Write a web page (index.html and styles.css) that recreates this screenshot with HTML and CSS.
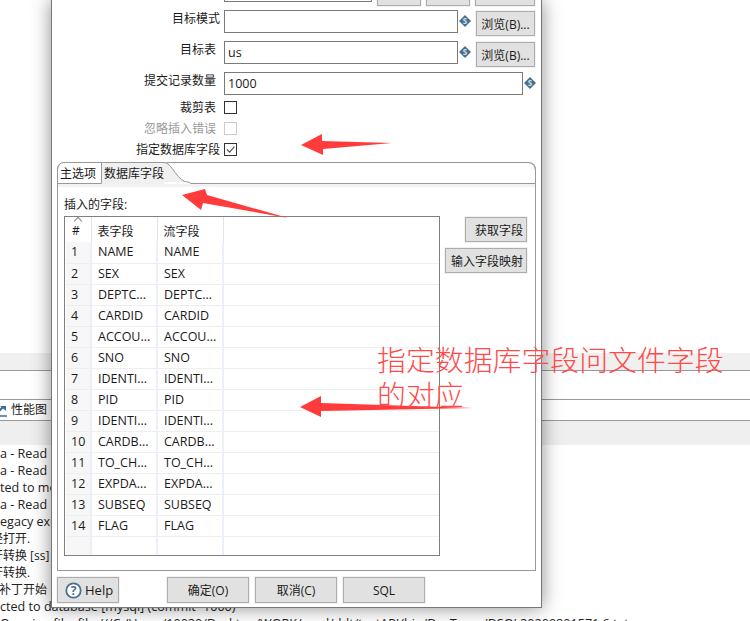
FILE: index.html
```html
<!DOCTYPE html>
<html lang="zh">
<head>
<meta charset="utf-8">
<title>表输出</title>
<link rel="stylesheet" href="styles.css">
</head>
<body>
<div class="desk">
  <div class="bg-band"></div>
  <div class="bg-gap-a"></div>
  <div class="bg-tabs">
    <div class="perf-tab">
      <svg class="perf-icon" width="8" height="14" viewBox="0 0 8 14"><path d="M-3 10 L3 4" fill="none" stroke="#3f6f94" stroke-width="2"/><path d="M0 3H6V8Z" fill="#3f6f94"/><path d="M-2 13H7" stroke="#3f6f94" stroke-width="1.5"/></svg>
      <span>性能图</span>
    </div>
  </div>
  <div class="bg-band2"></div>
  <div class="log">
    <div>a - Read</div>
    <div>a - Read</div>
    <div>ted to me</div>
    <div>a - Read</div>
    <div>egacy exe</div>
    <div class="cut">经打开.</div>
    <div class="cut">开转换 [ss]</div>
    <div class="cut">开转换.</div>
    <div class="cut-small">补丁开始</div>
    <div>cted to database [mysql] (commit=1000)</div>
    <div class="last">Opening file: file:///C:/Users/10020/Desktop/WORK/xxxd/ddt/testAPI/bin/DevTemp/DSQL20200801571 6.txt</div>
  </div>

  <div class="dialog">
    <div class="row row-first">
      <div class="label"></div>
      <div class="input input-first"></div>
      <div class="btn btn-top"></div>
      <div class="btn btn-top"></div>
      <div class="btn btn-top btn-top-wide"></div>
    </div>
    <div class="row">
      <div class="label">目标模式</div>
      <div class="input input-mid"></div>
      <svg class="var" viewBox="0 0 12 12"><path d="M6 0L12 6L6 12L0 6Z" fill="#4a7090"/><text x="6" y="9" text-anchor="middle" class="var-s">S</text></svg>
      <div class="btn btn-browse">浏览(B)...</div>
    </div>
    <div class="row">
      <div class="label label-short">目标表</div>
      <div class="input input-mid">us</div>
      <svg class="var" viewBox="0 0 12 12"><path d="M6 0L12 6L6 12L0 6Z" fill="#4a7090"/><text x="6" y="9" text-anchor="middle" class="var-s">S</text></svg>
      <div class="btn btn-browse">浏览(B)...</div>
    </div>
    <div class="row row-commit">
      <div class="label label-short">提交记录数量</div>
      <div class="input input-long">1000</div>
      <svg class="var" viewBox="0 0 12 12"><path d="M6 0L12 6L6 12L0 6Z" fill="#4a7090"/><text x="6" y="9" text-anchor="middle" class="var-s">S</text></svg>
    </div>
    <div class="row-check">
      <div class="label label-short">裁剪表</div>
      <div class="check"></div>
    </div>
    <div class="row-check">
      <div class="label label-short label-off">忽略插入错误</div>
      <div class="check check-off"></div>
    </div>
    <div class="row-check">
      <div class="label">指定数据库字段</div>
      <div class="check"><svg viewBox="0 0 11 11" width="11" height="11"><path d="M2 5.5L4.6 8.2L9.4 2.6" fill="none" stroke="#555" stroke-width="1.2"/></svg></div>
    </div>

    <div class="folder">
      <div class="tabs">
        <div class="tab">主选项</div>
        <div class="tab-on">
          <span class="tab-on-text">数据库字段</span>
          <svg class="tab-curve" width="26" height="21" viewBox="0 0 26 21"><path d="M0 0C9 0 12 20 26 20H0Z" fill="#f0f0f0"/><path d="M0 .5C9 .5 12 20.500 26 20.500" fill="none" stroke="#999"/></svg>
        </div>
        <div class="tab-rest"></div>
      </div>
      <div class="panel">
        <div class="caption">插入的字段:</div>
        <div class="panel-body">
          <div class="table-box">
            <table class="grid">
              <colgroup><col class="c-n"><col class="c-f"><col class="c-f"><col></colgroup>
              <thead>
                <tr><th class="num"><span class="sort"></span>#</th><th>表字段</th><th>流字段</th><th class="fill"></th></tr>
              </thead>
              <tbody>
                <tr><td class="num">1</td><td>NAME</td><td>NAME</td><td></td></tr>
                <tr><td class="num">2</td><td>SEX</td><td>SEX</td><td></td></tr>
                <tr><td class="num">3</td><td>DEPTC...</td><td>DEPTC...</td><td></td></tr>
                <tr><td class="num">4</td><td>CARDID</td><td>CARDID</td><td></td></tr>
                <tr><td class="num">5</td><td>ACCOU...</td><td>ACCOU...</td><td></td></tr>
                <tr><td class="num">6</td><td>SNO</td><td>SNO</td><td></td></tr>
                <tr><td class="num">7</td><td>IDENTI...</td><td>IDENTI...</td><td></td></tr>
                <tr><td class="num">8</td><td>PID</td><td>PID</td><td></td></tr>
                <tr><td class="num">9</td><td>IDENTI...</td><td>IDENTI...</td><td></td></tr>
                <tr><td class="num">10</td><td>CARDB...</td><td>CARDB...</td><td></td></tr>
                <tr><td class="num">11</td><td>TO_CH...</td><td>TO_CH...</td><td></td></tr>
                <tr><td class="num">12</td><td>EXPDA...</td><td>EXPDA...</td><td></td></tr>
                <tr><td class="num">13</td><td>SUBSEQ</td><td>SUBSEQ</td><td></td></tr>
                <tr><td class="num">14</td><td>FLAG</td><td>FLAG</td><td></td></tr>
                <tr class="empty"><td class="num"></td><td></td><td></td><td></td></tr>
              </tbody>
            </table>
          </div>
          <div class="side">
            <div class="btn btn-side-a">获取字段</div>
            <div class="btn btn-side-b">输入字段映射</div>
          </div>
        </div>
      </div>
    </div>

    <div class="footer">
      <div class="btn btn-help">
        <svg class="help-icon" width="17" height="17" viewBox="0 0 17 17"><circle cx="8.500" cy="8.500" r="7.200" fill="#fff" stroke="#4a7090" stroke-width="1.800"/><text x="8.500" y="12.500" text-anchor="middle" class="help-q">?</text></svg>
        <span>Help</span>
      </div>
      <div class="btn btn-foot btn-foot-first">确定(O)</div>
      <div class="btn btn-foot">取消(C)</div>
      <div class="btn btn-foot">SQL</div>
    </div>
  </div>

  <svg class="arrows" width="750" height="621" viewBox="0 0 750 621">
    <path d="M301 145L322 134L322 141L392 143L323 149L323 155Z"/>
    <path d="M182 195L205 189L207 195L288 218L203 203L201 210Z"/>
    <path d="M300 407L321 396L321 403L474 408L321 411L321 417Z"/>
  </svg>
  <div class="note">指定数据库字段问文件字段<br>的对应</div>
</div>
</body>
</html>
```

FILE: styles.css
```css
* { box-sizing: border-box; }
html, body { margin: 0; padding: 0; background: #fff; }
body {
  font-family: "Open Sans", "Noto Sans CJK SC", sans-serif;
  font-size: 12px;
  color: #1a1a1a;
}
.desk {
  position: relative;
  width: 750px;
  height: 621px;
  overflow: hidden;
  padding-top: 353px;
}
.bg-band { height: 18px; background: #f0f0f0; border-bottom: 1px solid #999; }
.bg-gap-a { height: 28px; }
.bg-tabs { height: 22px; border-top: 1px solid #999; border-bottom: 1px solid #999; }
.perf-tab {
  display: flex;
  align-items: center;
  gap: 3px;
  height: 20px;
  color: #1a1a1a;
  line-height: 20px;
}
.perf-icon { flex: none; }
.bg-band2 { height: 24px; background: #efefef; }
.log {
  line-height: 17px;
  font-size: 12.600px;
  white-space: nowrap;
  color: #222;
}
.log .cut { margin-left: -9px; font-size: 12px; }
.log .cut-small { margin-left: -1px; font-size: 12px; }

.dialog {
  position: absolute;
  left: 51px;
  top: 0;
  width: 491px;
  height: 608px;
  background: #fff;
  border: 1px solid #777;
  border-top: 0;
  box-shadow: 0 0 18px rgba(0, 0, 0, .45);
  overflow: hidden;
}
.row { display: flex; align-items: flex-start; height: 31px; }
.row-first { margin-top: -21px; }
.row-commit { height: 29px; }
.label {
  flex: none;
  width: 168px;
  text-align: right;
  line-height: 18px;
  margin-right: 4px;
  white-space: nowrap;
}
.label-short { padding-right: 4px; }
.label-off { color: #9a9a9a; }
.input {
  flex: none;
  height: 23px;
  border: 1px solid #7a7a7a;
  background: #fff;
  padding-left: 3px;
  line-height: 22px;
  font-size: 12.500px;
}
.input-first { width: 148px; }
.input-mid { width: 234px; }
.input-long { width: 299px; }
.var { flex: none; width: 12px; height: 12px; margin: 5px 0 0 1px; }
.var-s { font-family: "Open Sans", sans-serif; font-size: 8px; font-weight: 700; fill: #cfe0ec; }
.btn {
  flex: none;
  display: flex;
  align-items: center;
  justify-content: center;
  background: #e1e1e1;
  border: 1px solid #adadad;
  outline: 1px solid #f2f2f2;
  color: #1a1a1a;
  white-space: nowrap;
}
.btn-top { width: 44px; height: 25px; margin: 2px 0 0 5px; }
.btn-top-wide { width: 60px; }
.btn-browse { width: 59px; height: 25px; margin: 1px 0 0 5px; }
.row-check { display: flex; align-items: flex-start; height: 21px; }
.row-check .label { line-height: 13px; }
.check { flex: none; width: 13px; height: 13px; border: 1px solid #333; background: #fff; display: flex; align-items: center; justify-content: center; }
.check-off { border-color: #ccc; }

.folder {
  margin: -2px 0 0 5px;
  width: 479px;
  height: 409px;
  border: 1px solid #999;
  border-top: 0;
  border-radius: 8px 8px 0 0;
  display: flex;
  flex-direction: column;
}
.tabs { display: flex; height: 22px; flex: none; }
.tab {
  width: 45px;
  margin-left: -1px;
  height: 22px;
  border: 1px solid #999;
  border-radius: 7px 0 0 0;
  line-height: 21px;
  padding-left: 2px;
}
.tab-on { display: flex; height: 22px; border-top: 1px solid #999; }
.tab-on-text { display: block; width: 62px; height: 21px; background: #f0f0f0; line-height: 22px; padding-left: 2px; }
.tab-curve { display: block; flex: none; margin-top: -1px; }
.tab-rest {
  flex: 1;
  height: 22px;
  border: 1px solid #999;
  border-left: 0;
  border-radius: 0 8px 0 0;
  margin-right: -1px;
}
.panel { flex: 1; border-top: 3px solid #f2f2f2; padding-left: 6px; }
.caption { line-height: 17px; padding-top: 9px; height: 29px; }
.panel-body { display: flex; align-items: flex-start; }
.table-box { flex: none; width: 376px; height: 340px; border: 1px solid #808080; overflow: hidden; }
.grid { border-collapse: collapse; table-layout: fixed; width: 374px; margin-left: 1px; font-size: 12.500px; }
.c-n { width: 25px; }
.c-f { width: 66px; }
.grid th {
  height: 25px;
  text-align: left;
  font-weight: 400;
  padding: 2px 0 0 6px;
  border-right: 1px solid #e3e3e3;
  position: relative;
  font-size: 12px;
  background: #fff;
}
.grid th.fill { border-right: 0; }
.grid td {
  height: 21px;
  padding: 0 0 0 6px;
  border-right: 2px solid #ebf0f8;
  border-bottom: 1px solid #eeeeee;
  line-height: 20px;
  white-space: nowrap;
  overflow: hidden;
}
.grid td:last-child { border-right: 0; }
.grid td.num { padding-left: 5px; background: #f7f7f7; }
.grid .empty td { height: 22px; border-bottom: 0; }
.sort {
  position: absolute;
  left: 9px;
  top: 1px;
  width: 6px;
  height: 6px;
  border-left: 1px solid #888;
  border-top: 1px solid #888;
  transform: rotate(45deg);
}
.side { flex: 1; display: flex; flex-direction: column; align-items: flex-end; padding: 1px 8px 0 0; }
.btn-side-a { width: 62px; height: 25px; justify-content: flex-end; padding-right: 3px; }
.btn-side-b { width: 82px; height: 25px; margin-top: 6px; justify-content: flex-end; padding-right: 3px; }

.footer { display: flex; padding: 6px 0 0 5px; }
.btn-help { width: 62px; height: 26px; justify-content: flex-start; padding-left: 7px; gap: 3px; font-size: 13px; }
.help-icon { flex: none; }
.help-q { font-family: "Open Sans", sans-serif; font-size: 12px; font-weight: 700; fill: #4a7090; }
.btn-foot { width: 82px; height: 26px; margin-right: 6px; }
.btn-foot-first { margin-left: 48px; }

.arrows { position: absolute; left: 0; top: 0; fill: #ff3b3b; }
.note {
  position: absolute;
  left: 377px;
  top: 341px;
  font-family: "Noto Sans CJK SC", sans-serif;
  font-weight: 300;
  font-size: 28.900px;
  line-height: 35px;
  color: #ff4a4a;
  white-space: nowrap;
}
```
